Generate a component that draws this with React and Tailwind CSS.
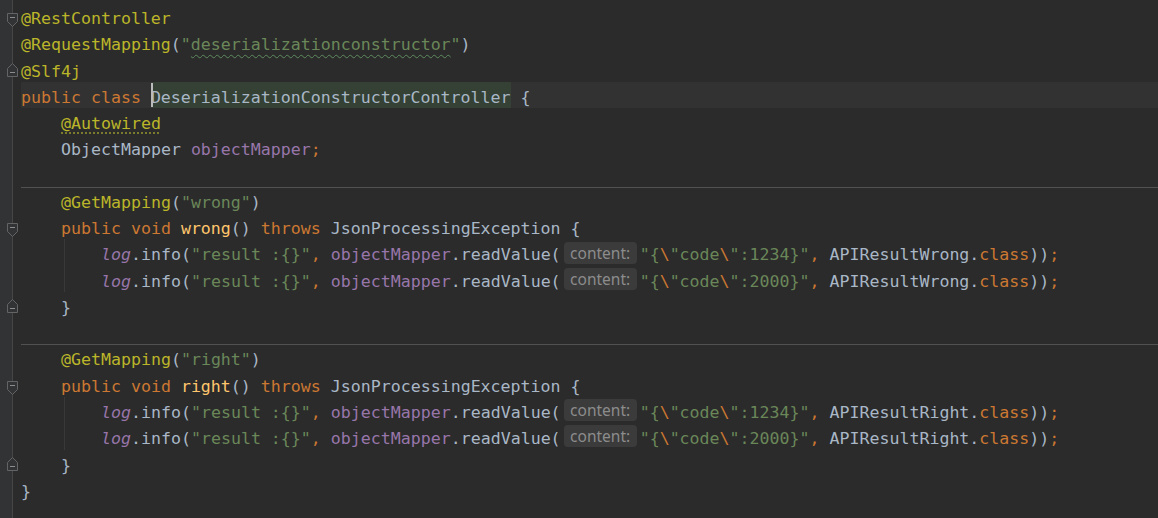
import React from "react";

const A = "text-[#bbb529]";
const K = "text-[#cc7832]";
const S = "text-[#6a8759]";
const F = "text-[#9876aa]";
const D = "text-[#a9b7c6]";
const M = "text-[#ffc66d]";

function Hint() {
  return (
    <span className="mx-[3px] my-auto flex h-[22px] w-[73px] items-center justify-center rounded-[4px] bg-[#3b3b3b] font-['Noto_Sans',sans-serif] text-[15.5px] leading-[22px] text-[#8c8c8c]">
      content:
    </span>
  );
}

function Indent({ n }) {
  return <span className={n === 4 ? "w-[40px]" : "w-[80px]"} />;
}

function GuideIndent() {
  return (
    <>
      <span className="w-[43px]" />
      <span className="w-[37px] border-l border-[#393939]" />
    </>
  );
}

function LogLine({ code, cls }) {
  return (
    <>
      <GuideIndent />
      <span className={`${F} italic`}>log</span>
      <span className={D}>.info(</span>
      <span className={S}>"result :{"{}"}"</span>
      <span className={K}>, </span>
      <span className={F}>objectMapper</span>
      <span className={D}>.readValue(</span>
      <Hint />
      <span className={S}>"{"{"}</span>
      <span className={K}>\</span>
      <span className={S}>"code</span>
      <span className={K}>\</span>
      <span className={S}>{`":${code}}"`}</span>
      <span className={K}>, </span>
      <span className={D}>{`${cls}.`}</span>
      <span className={K}>class</span>
      <span className={D}>))</span>
      <span className={K}>;</span>
    </>
  );
}

function FoldStart() {
  return (
    <svg width="11" height="14" viewBox="0 0 11 14" className="absolute left-[7px] top-[10px]">
      <path d="M0.5 0.5 H10.5 V8.5 L5.5 13.5 L0.5 8.5 Z" fill="#313335" stroke="#626466" />
      <path d="M3 4.5 H8" stroke="#8a8c8e" />
    </svg>
  );
}

function FoldEnd() {
  return (
    <svg width="11" height="14" viewBox="0 0 11 14" className="absolute left-[7px] top-[7px]">
      <path d="M0.5 13.5 H10.5 V5.5 L5.5 0.5 L0.5 5.5 Z" fill="#313335" stroke="#626466" />
      <path d="M3 9.5 H8" stroke="#8a8c8e" />
    </svg>
  );
}

const rowBase = "flex h-[26.28px] shrink-0 leading-[32px] whitespace-pre";

export default function App() {
  const folds = { 1: "s", 3: "e", 9: "s", 12: "e", 15: "s", 18: "e" };

  const lines = [
    { content: <span className={A}>@RestController</span> },
    {
      content: (
        <>
          <span className={A}>@RequestMapping</span>
          <span className={D}>(</span>
          <span className={S}>"</span>
          <span className={`${S} underline decoration-wavy decoration-[#5f8a5f] underline-offset-[4px] decoration-[1px]`}>
            deserializationconstructor
          </span>
          <span className={S}>"</span>
          <span className={D}>)</span>
        </>
      ),
    },
    { content: <span className={A}>@Slf4j</span> },
    {
      current: true,
      content: (
        <>
          <span className={K}>public class </span>
          <span className={`${D} relative bg-[#344134]`}>
            <span className="absolute left-0 top-[1px] h-[24px] w-[2px] bg-[#bbbbbb]" />
            DeserializationConstructorController
          </span>
          <span className={D}> {"{"}</span>
        </>
      ),
    },
    {
      content: (
        <>
          <Indent n={4} />
          <span className={`${A} underline decoration-dotted decoration-[#8c8c30] underline-offset-[4px]`}>@Autowired</span>
        </>
      ),
    },
    {
      content: (
        <>
          <Indent n={4} />
          <span className={D}>ObjectMapper </span>
          <span className={F}>objectMapper</span>
          <span className={K}>;</span>
        </>
      ),
    },
    { content: null },
    {
      sep: true,
      content: (
        <>
          <Indent n={4} />
          <span className={A}>@GetMapping</span>
          <span className={D}>(</span>
          <span className={S}>"wrong"</span>
          <span className={D}>)</span>
        </>
      ),
    },
    {
      content: (
        <>
          <Indent n={4} />
          <span className={K}>public void </span>
          <span className={M}>wrong</span>
          <span className={D}>() </span>
          <span className={K}>throws </span>
          <span className={D}>JsonProcessingException {"{"}</span>
        </>
      ),
    },
    { content: <LogLine code="1234" cls="APIResultWrong" /> },
    { content: <LogLine code="2000" cls="APIResultWrong" /> },
    {
      content: (
        <>
          <Indent n={4} />
          <span className={D}>{"}"}</span>
        </>
      ),
    },
    { content: null },
    {
      sep: true,
      content: (
        <>
          <Indent n={4} />
          <span className={A}>@GetMapping</span>
          <span className={D}>(</span>
          <span className={S}>"right"</span>
          <span className={D}>)</span>
        </>
      ),
    },
    {
      content: (
        <>
          <Indent n={4} />
          <span className={K}>public void </span>
          <span className={M}>right</span>
          <span className={D}>() </span>
          <span className={K}>throws </span>
          <span className={D}>JsonProcessingException {"{"}</span>
        </>
      ),
    },
    { content: <LogLine code="1234" cls="APIResultRight" /> },
    { content: <LogLine code="2000" cls="APIResultRight" /> },
    {
      content: (
        <>
          <Indent n={4} />
          <span className={D}>{"}"}</span>
        </>
      ),
    },
    { content: <span className={D}>{"}"}</span> },
  ];

  return (
    <div className="flex h-[518px] w-[1158px] overflow-hidden bg-[#2b2b2b] font-['DejaVu_Sans_Mono',monospace] text-[16.6px] text-[#a9b7c6]">
      <div className="flex h-full w-[21px] shrink-0 flex-col bg-[linear-gradient(to_right,#313335_0px,#313335_12px,#464646_12px,#464646_13px,#2b2b2b_13px)] pt-[3px]">
        {lines.map((_, i) => (
          <div key={i} className="relative h-[26.28px] shrink-0">
            {folds[i + 1] === "s" && <FoldStart />}
            {folds[i + 1] === "e" && <FoldEnd />}
          </div>
        ))}
      </div>
      <div className="flex min-w-0 flex-1 flex-col pt-[3px]">
        {lines.map((l, i) => (
          <div
            key={i}
            className={`${rowBase} ${l.current ? "bg-[#323232]" : ""} ${l.sep ? "shadow-[inset_0_1px_0_#515151]" : ""}`}
          >
            {l.content}
          </div>
        ))}
      </div>
    </div>
  );
}
